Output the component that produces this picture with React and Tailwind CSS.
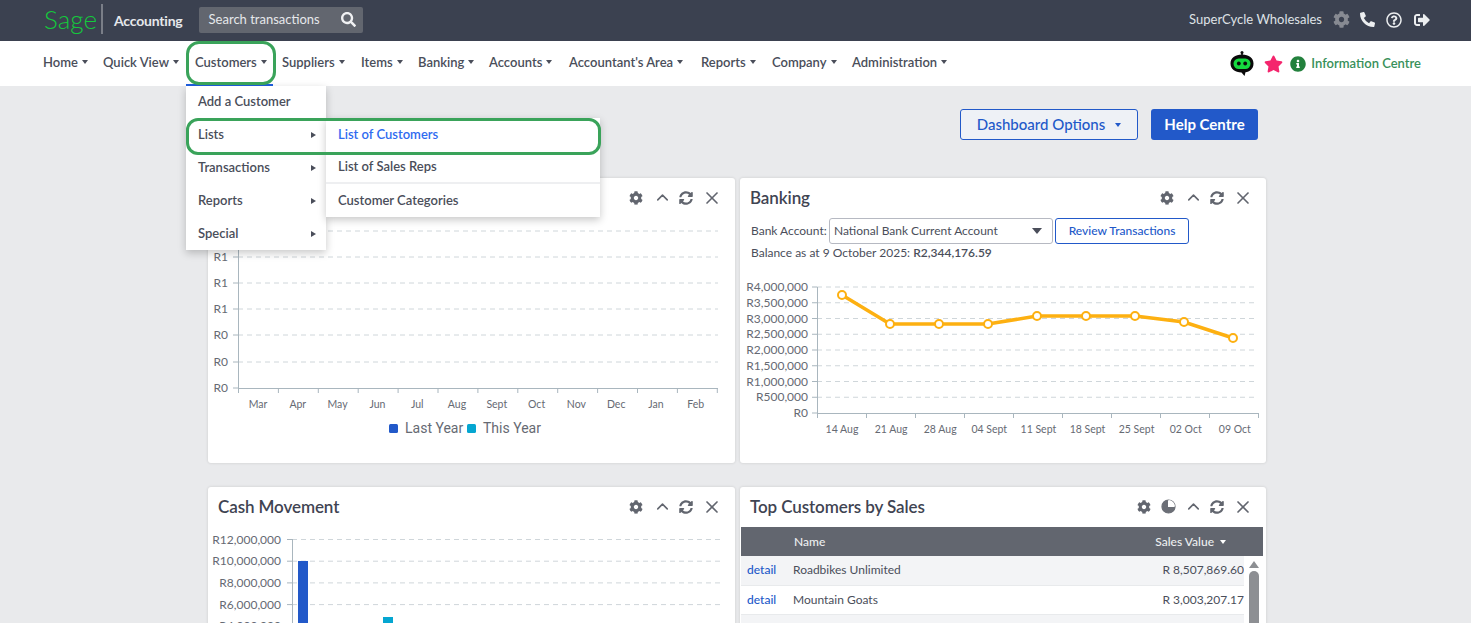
import React from "react";
import { FaCog, FaPhoneAlt, FaRegQuestionCircle, FaSignOutAlt, FaInfoCircle, FaStar, FaSearch, FaSyncAlt } from "react-icons/fa";
import { ChevronUp, X } from "lucide-react";

const nav = [
  ["Home", "w-[60px]"],
  ["Quick View", "w-[92px]"],
  ["Customers", "w-[87px]"],
  ["Suppliers", "w-[79px]"],
  ["Items", "w-[57px]"],
  ["Banking", "w-[71px]"],
  ["Accounts", "w-[80px]"],
  ["Accountant's Area", "w-[132px]"],
  ["Reports", "w-[71px]"],
  ["Company", "w-[80px]"],
  ["Administration", "w-[110px]"],
];

const Caret = ({ className = "" }) => (
  <span className={"inline-block w-0 h-0 border-l-[3.5px] border-r-[3.5px] border-t-[4px] border-l-transparent border-r-transparent border-t-[#4a4e5a] " + className} />
);

const RightCaret = () => (
  <span className="inline-block w-0 h-0 border-t-[3.5px] border-b-[3.5px] border-l-[5px] border-t-transparent border-b-transparent border-l-[#4a4e5a]" />
);

const Robot = () => (
  <svg width="24" height="27" viewBox="0 0 24 27">
    <circle cx="12" cy="2.5" r="1.5" fill="#111" />
    <rect x="11.2" y="2" width="1.6" height="4" fill="#111" />
    <path d="M12 4.5C19 4.5 23.5 8 23.5 13.5C23.5 19 19.5 22 15.5 22.3L14.5 26L11.5 22.5C5 22.3 .5 19 .5 13.5C.5 8 5 4.5 12 4.5Z" fill="#0a0a0a" />
    <rect x="3.5" y="8.5" width="17" height="10.5" rx="5.2" fill="#15d93f" />
    <circle cx="8.8" cy="13.5" r="1.9" fill="#0a0a0a" />
    <circle cx="15.2" cy="13.5" r="1.9" fill="#0a0a0a" />
  </svg>
);

const Pie = () => (
  <svg width="15" height="15" viewBox="0 0 15 15">
    <circle cx="7.5" cy="7.5" r="6.5" fill="none" stroke="#6b6e76" strokeWidth="1.2" />
    <path d="M7.5 7.5V1A6.5 6.5 0 0 1 14 7.5Z" fill="#fff" />
    <path d="M7 8V1A6.5 6.5 0 1 0 14 8Z" fill="#6b6e76" />
  </svg>
);

const CardTools = ({ pie }) => (
  <div className="flex items-center text-[#62666f]">
    <FaCog className="w-[14px] h-[14px] mr-[10px]" />
    {pie && <span className="mr-[8px] flex"><Pie /></span>}
    <ChevronUp className="w-[19px] h-[19px] mr-[7px]" strokeWidth={2} />
    <FaSyncAlt className="w-[14px] h-[14px] mr-[9px]" />
    <X className="w-[20px] h-[20px] mr-[13px]" strokeWidth={2} />
  </div>
);

const Card = ({ title, pie, children, className = "" }) => (
  <section className={"bg-white rounded-[3px] h-[285px] shadow-[0_0_3px_rgba(0,0,0,0.14)] overflow-hidden " + className}>
    <header className="h-[38px] pt-px flex items-center justify-between">
      <h2 className="pl-[10px] text-[17px] font-semibold text-[#3f4452] tracking-[-0.1px]">{title}</h2>
      <CardTools pie={pie} />
    </header>
    {children}
  </section>
);

const axis = "#a9b6be";
const grid = "#cfd6da";
const label = "#666a73";

const SalesChart = () => {
  const ys = [
    ["", 231],
    ["R1", 257],
    ["R1", 283],
    ["R1", 309],
    ["R0", 335],
    ["R0", 362],
    ["R0", 388],
  ];
  const months = ["Mar", "Apr", "May", "Jun", "Jul", "Aug", "Sept", "Oct", "Nov", "Dec", "Jan", "Feb"];
  return (
    <svg width="527" height="247" viewBox="208 216 527 247" className="block">
      {ys.map(([t, y], i) => (
        <g key={i}>
          {i < 6 && <line x1="238" x2="718" y1={y} y2={y} stroke={grid} strokeDasharray="5 4" />}
          <line x1="233" x2="238" y1={y} y2={y} stroke={axis} />
          <text x="228" y={y + 4} textAnchor="end" fontSize="12" fill={label}>{t}</text>
        </g>
      ))}
      <line x1="238.5" x2="238.5" y1="231" y2="388" stroke={axis} />
      <line x1="238" x2="718" y1="388.5" y2="388.5" stroke={axis} />
      {Array.from({ length: 13 }).map((_, i) => (
        <line key={i} x1={238.5 + i * 39.9} x2={238.5 + i * 39.9} y1="388" y2="393" stroke={axis} />
      ))}
      {months.map((m, i) => (
        <text key={m} x={258 + i * 39.8} y="408" textAnchor="middle" fontSize="10.5" fill={label}>{m}</text>
      ))}
      <rect x="389" y="424" width="9" height="9" rx="1.5" fill="#2259c9" />
      <text x="405" y="433" fontSize="14" fill={label} style={{ fontFamily: "Roboto, sans-serif" }}>Last Year</text>
      <rect x="467" y="424" width="9" height="9" rx="1.5" fill="#05a6d1" />
      <text x="483" y="433" fontSize="14" fill={label} style={{ fontFamily: "Roboto, sans-serif" }}>This Year</text>
    </svg>
  );
};

const BankChart = () => {
  const labels = ["R4,000,000", "R3,500,000", "R3,000,000", "R2,500,000", "R2,000,000", "R1,500,000", "R1,000,000", "R500,000", "R0"];
  const xl = ["14 Aug", "21 Aug", "28 Aug", "04 Sept", "11 Sept", "18 Sept", "25 Sept", "02 Oct", "09 Oct"];
  const pts = [[842, 295], [890, 324], [939, 324], [988, 324], [1037, 316], [1086, 316], [1135, 316], [1184, 322], [1233, 338]];
  return (
    <svg width="526" height="170" viewBox="740 268 526 170" className="block">
      {labels.map((t, i) => {
        const y = 287 + i * 15.75;
        return (
          <g key={t}>
            {i < 8 && <line x1="817" x2="1258" y1={y} y2={y} stroke={grid} strokeDasharray="5 4" />}
            <line x1="812" x2="817" y1={y} y2={y} stroke={axis} />
            <text x="808" y={y + 4} textAnchor="end" fontSize="12" fill={label}>{t}</text>
          </g>
        );
      })}
      <line x1="817.5" x2="817.5" y1="287" y2="413" stroke={axis} />
      <line x1="817" x2="1258" y1="413.5" y2="413.5" stroke={axis} />
      {Array.from({ length: 10 }).map((_, i) => (
        <line key={i} x1={817.5 + i * 49} x2={817.5 + i * 49} y1="413" y2="418" stroke={axis} />
      ))}
      {xl.map((t, i) => (
        <text key={t} x={842 + i * 49.1} y="433" textAnchor="middle" fontSize="10.5" fill={label}>{t}</text>
      ))}
      <polyline points={pts.map((p) => p.join(",")).join(" ")} fill="none" stroke="#fdb011" strokeWidth="3.5" />
      {pts.map(([x, y]) => (
        <circle key={x} cx={x} cy={y} r="4" fill="#fff" stroke="#fdb011" strokeWidth="2" />
      ))}
    </svg>
  );
};

const CashChart = () => {
  const labels = ["R12,000,000", "R10,000,000", "R8,000,000", "R6,000,000", "R4,000,000"];
  return (
    <svg width="527" height="247" viewBox="208 525 527 247" className="block">
      {labels.map((t, i) => {
        const y = 539.5 + i * 21.7;
        return (
          <g key={t}>
            <line x1="292" x2="724" y1={y} y2={y} stroke={grid} strokeDasharray="5 4" />
            <line x1="287" x2="292" y1={y} y2={y} stroke={axis} />
            <text x="281" y={y + 4} textAnchor="end" fontSize="12" fill={label}>{t}</text>
          </g>
        );
      })}
      <line x1="292.5" x2="292.5" y1="539" y2="700" stroke={axis} />
      <rect x="298" y="561" width="10" height="120" fill="#2259c9" />
      <rect x="383" y="617" width="10" height="60" fill="#05a6d1" />
    </svg>
  );
};

const rows = [
  ["Roadbikes Unlimited", "R 8,507,869.60", "bg-[#f3f4f6]"],
  ["Mountain Goats", "R 3,003,207.17", "bg-white"],
];

const TopCustomers = () => (
  <div className="pl-px pr-[3px]">
    <div className="h-[29px] bg-[#62666f] flex items-center text-[12px] font-medium text-[#eceef0]">
      <span className="pl-[53px]">Name</span>
      <span className="ml-auto pr-[37px] flex items-center gap-[6px]">Sales Value <Caret className="border-t-white" /></span>
    </div>
    <div className="flex">
      <div className="flex-1 text-[12px] text-[#4a4e5a]">
        {rows.map(([n, v, bg]) => (
          <div key={n} className={"h-[29.5px] flex items-center border-b border-[#e8eaec] " + bg}>
            <span className="pl-[6px] w-[52px] text-[#2259c9] font-medium">detail</span>
            <span>{n}</span>
            <span className="ml-auto">{v}</span>
          </div>
        ))}
        <div className="h-[40px] bg-[#f3f4f6]" />
      </div>
      <div className="w-[19px] shrink-0 bg-white flex flex-col items-center pt-[5px]">
        <span className="w-0 h-0 border-l-[5px] border-r-[5px] border-b-[7px] border-l-transparent border-r-transparent border-b-[#8d8f93]" />
        <span className="mt-[3px] w-[10px] h-[60px] rounded-[5px] bg-[#8d8f93]" />
      </div>
    </div>
  </div>
);

export default function App() {
  return (
    <div
      className="relative h-[623px] w-full overflow-hidden bg-[#e9eaec]"
      style={{ fontFamily: "Lato, 'Liberation Sans', sans-serif" }}
    >
      <div className="h-[41px] bg-[#3b4150] flex items-center text-[#dfe2e6]">
        <span className="ml-[44px] w-[57px] text-[26px] leading-none font-light text-[#14c93c] -mt-[3px]">Sage</span>
        <span className="w-[2px] h-[30px] bg-[#7a7e88] -mt-[3px]" />
        <span className="ml-[11px] text-[14px] font-bold tracking-[-0.2px] text-[#e6e8eb]">Accounting</span>
        <div className="ml-[16px] w-[164px] h-[26px] -mt-[2px] rounded-[2px] bg-[#62666f] flex items-center pl-[10px] pr-[7px] text-[13px] text-[#e6e8eb]">
          Search transactions
          <FaSearch className="ml-auto w-[15px] h-[15px] text-[#f0f1f3]" />
        </div>
        <div className="ml-auto flex items-center pr-[41px] -mt-[2px]">
          <span className="text-[13px] text-[#dfe2e6] mr-[11px]">SuperCycle Wholesales</span>
          <FaCog className="w-[17px] h-[17px] text-[#878a92] mr-[10px]" />
          <FaPhoneAlt className="w-[15px] h-[15px] text-[#eceef0] mr-[11px]" />
          <FaRegQuestionCircle className="w-[16px] h-[16px] text-[#eceef0] mr-[12px]" />
          <FaSignOutAlt className="w-[16px] h-[16px] text-[#eceef0]" />
        </div>
      </div>

      <nav className="h-[45px] bg-white flex items-center pl-[43px] text-[13px] font-semibold text-[#4a4e5a]">
        {nav.map(([n, w]) => (
          <span key={n} className={"flex items-center gap-[4px] shrink-0 -mt-[1px] " + w}>
            {n} <Caret className="-mt-[2px]" />
          </span>
        ))}
        <div className="ml-auto flex items-center pr-[50px]">
          <Robot />
          <FaStar className="ml-[10px] w-[19px] h-[18px] text-[#f4256d]" />
          <FaInfoCircle className="ml-[7px] w-[16px] h-[16px] text-[#23813d]" />
          <span className="ml-[5px] text-[#38905a]">Information Centre</span>
        </div>
      </nav>

      <main className="pl-[208px] pr-[205px] pt-[23px]">
        <div className="h-[31px] flex justify-end pr-[8px] gap-[13px] mb-[38px]">
          <button className="w-[178px] h-[31px] rounded-[3px] border border-[#2259c9] bg-[#eef1f6] text-[#2259c9] text-[15px] font-medium flex items-center justify-center gap-[10px]">
            Dashboard Options <Caret className="border-t-[#2259c9]" />
          </button>
          <button className="w-[107px] h-[31px] rounded-[3px] bg-[#2259c9] text-white text-[15px] font-bold">Help Centre</button>
        </div>

        <div className="grid grid-cols-[527px_526px] gap-x-[5px] gap-y-[24px]">
          <Card title="Sales"><SalesChart /></Card>
          <Card title="Banking">
            <div className="pl-[11px] text-[12px] text-[#4a4e5a]">
              <div className="flex items-center h-[28px] pt-[1px]">
                <span className="w-[78px]">Bank Account:</span>
                <div className="w-[224px] h-[26px] rounded-[3px] border border-[#b6b9c2] flex items-center pl-[4px] pr-[10px]">
                  National Bank Current Account
                  <span className="ml-auto w-0 h-0 border-l-[5px] border-r-[5px] border-t-[6px] border-l-transparent border-r-transparent border-t-[#4a4e5a]" />
                </div>
                <button className="ml-[2px] w-[134px] h-[26px] rounded-[3px] border border-[#2259c9] text-[#2259c9] font-medium">Review Transactions</button>
              </div>
              <div className="h-[18px] leading-[18px]">
                Balance as at 9 October 2025: <b className="font-semibold">R2,344,176.59</b>
              </div>
            </div>
            <div className="h-[6px]" />
            <BankChart />
          </Card>
          <Card title="Cash Movement"><CashChart /></Card>
          <Card title="Top Customers by Sales" pie>
            <div className="h-[2px]" />
            <TopCustomers />
          </Card>
        </div>
      </main>

      {/* Open Customers menu */}
      <div className="absolute left-[186px] top-[84px] w-[87px] h-[2px] bg-[#1f5fe0]" />
      <div className="absolute left-[186px] top-[86px] w-[140px] h-[164px] bg-white shadow-[0_3px_8px_rgba(0,0,0,0.22)] text-[13px] font-semibold text-[#4a4e5a]">
        {["Add a Customer", "Lists", "Transactions", "Reports", "Special"].map((t, i) => (
          <div key={t} className="h-[33px] flex items-center pl-[12px] pr-[10px] justify-between first:h-[32px]">
            {t}
            {i > 0 && <RightCaret />}
          </div>
        ))}
      </div>
      <div className="absolute left-[326px] top-[118px] w-[274px] h-[99px] bg-white shadow-[0_3px_8px_rgba(0,0,0,0.22)] text-[13px] font-semibold text-[#4a4e5a]">
        <div className="h-[33px] flex items-center pl-[12px] text-[#2f6bf0]">List of Customers</div>
        <div className="h-[33px] flex items-center pl-[12px] border-b-2 border-[#eeeff1]">List of Sales Reps</div>
        <div className="h-[33px] flex items-center pl-[12px]">Customer Categories</div>
      </div>

      {/* Green highlight annotations */}
      <div className="absolute left-[186px] top-[41px] w-[90px] h-[44px] rounded-[13px] border-[3px] border-[#3aa35a]" />
      <div className="absolute left-[186px] top-[118px] w-[415px] h-[37px] rounded-[12px] border-[3px] border-[#3aa35a]" />
    </div>
  );
}
